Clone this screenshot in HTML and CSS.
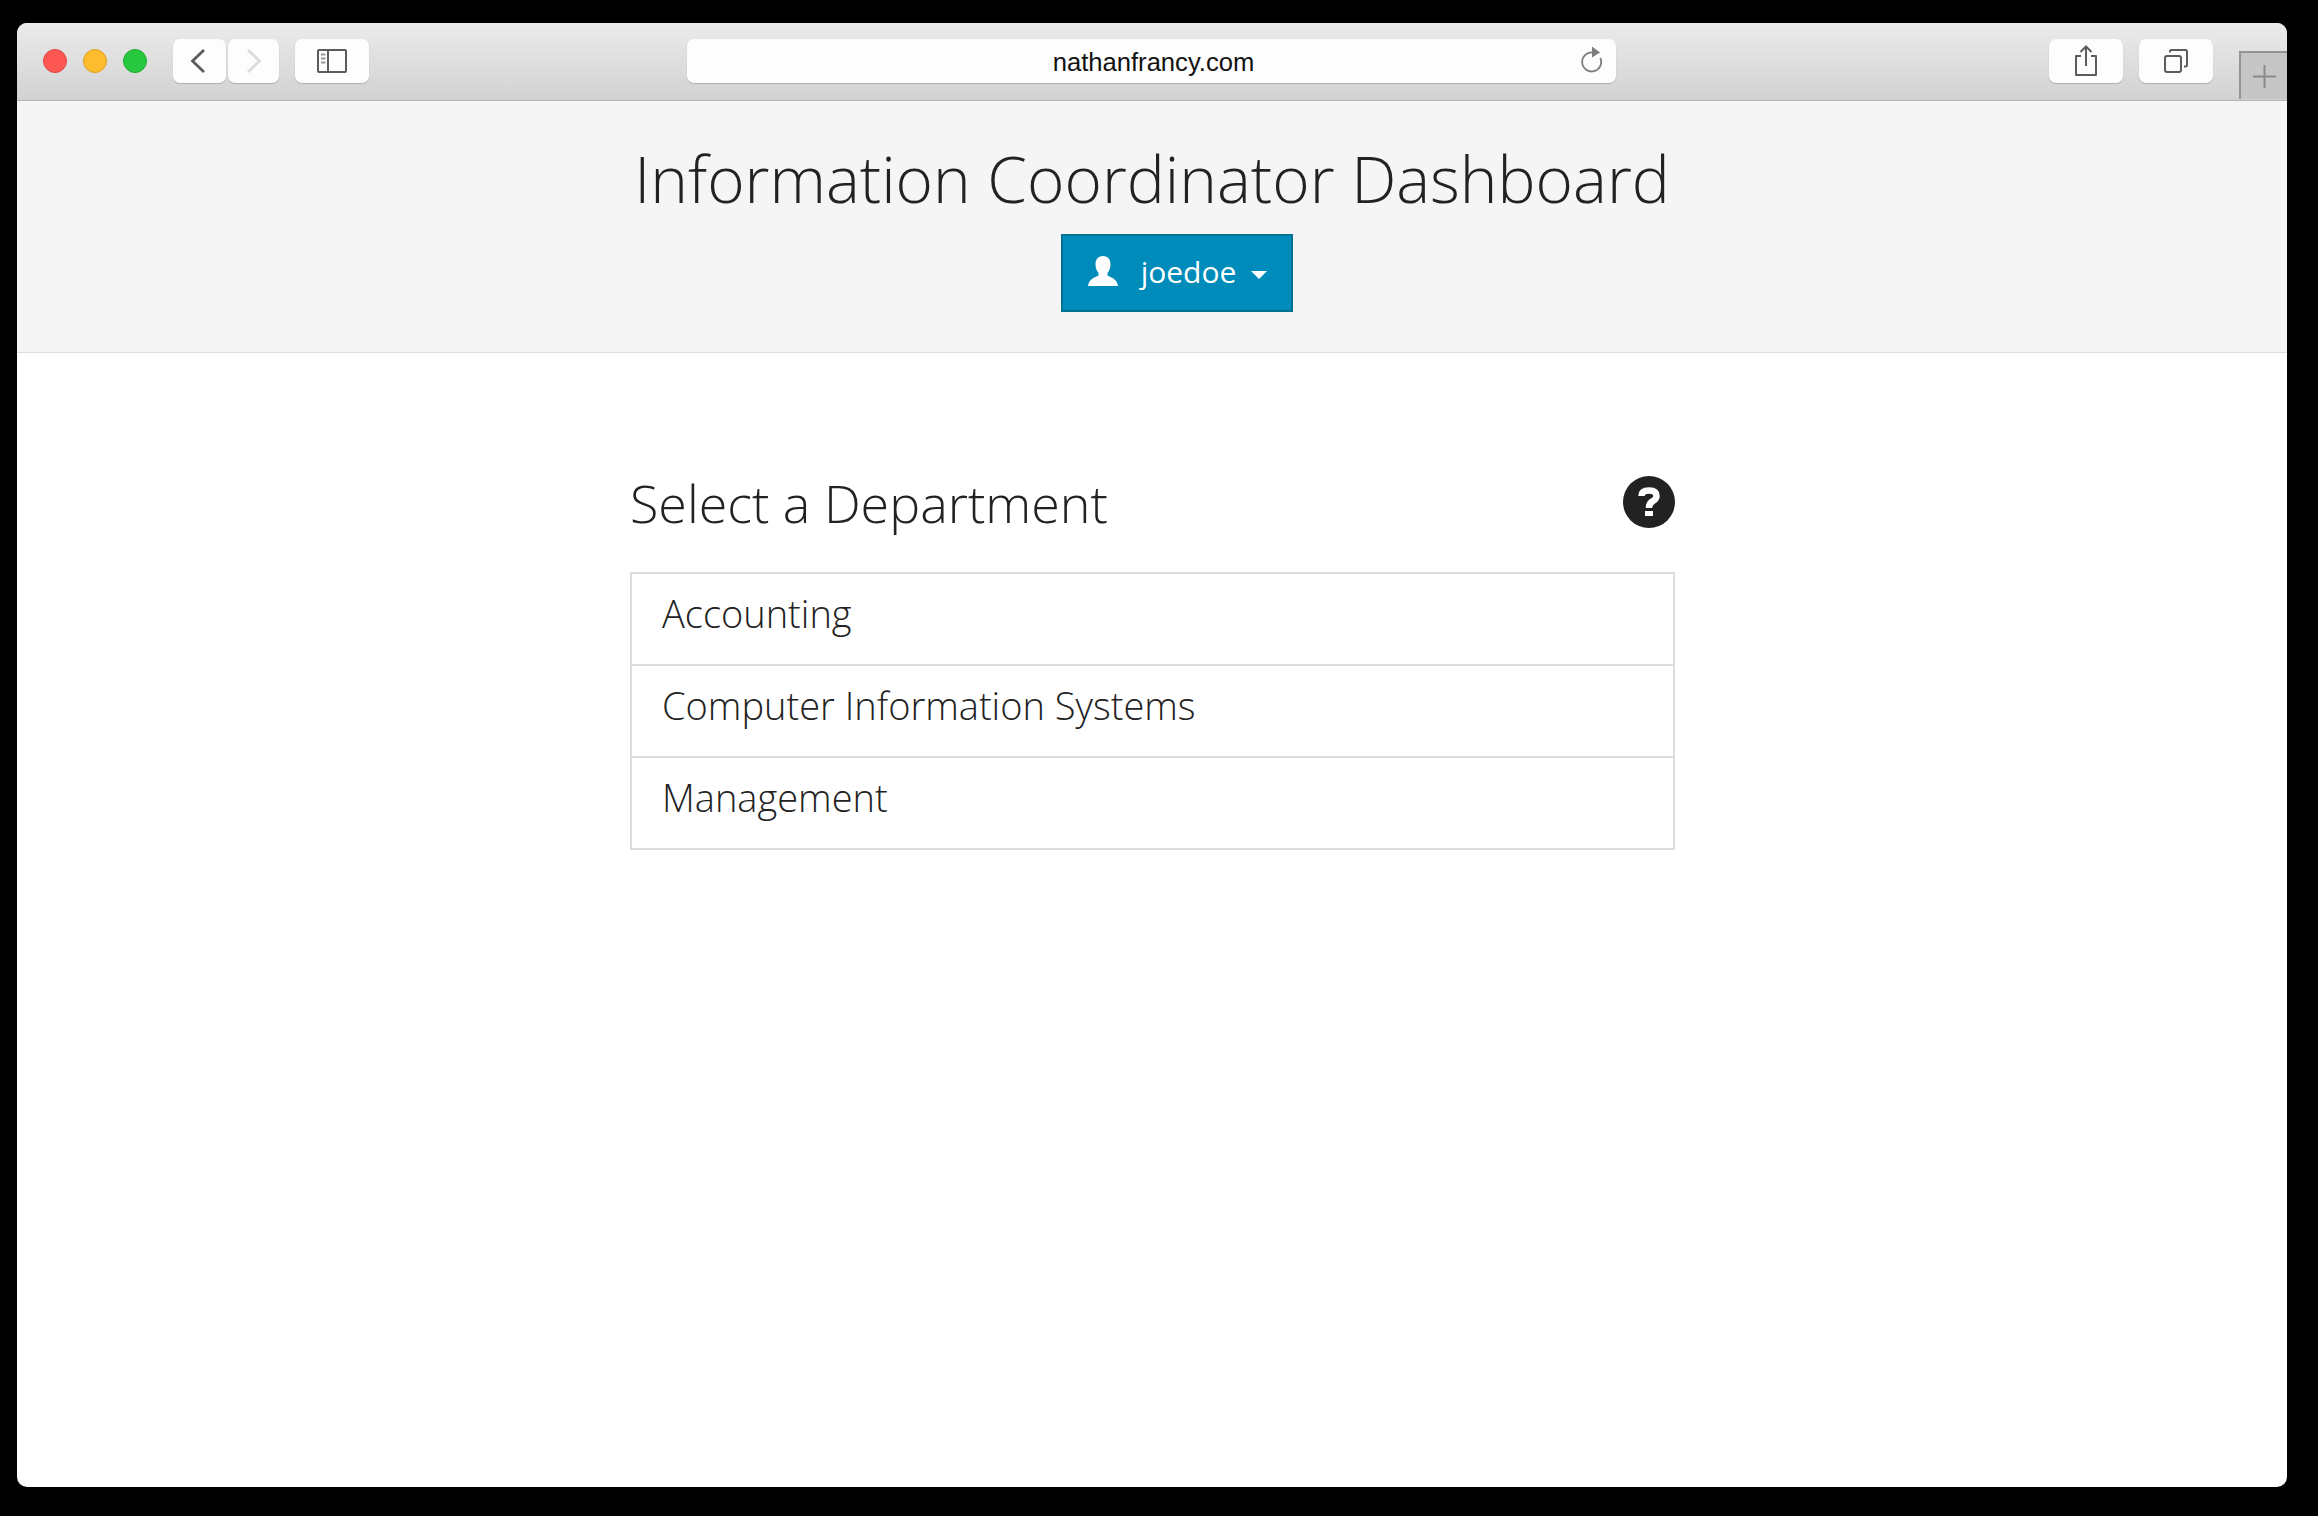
FILE: index.html
```html
<!DOCTYPE html>
<html lang="en">

<head>
    <meta charset="UTF-8">
    <title>Information Coordinator Dashboard</title>
    <link rel="stylesheet" href="styles.css">
</head>

<body>
    <div class="window">
        <!-- browser toolbar -->
        <div class="toolbar">
            <div class="lights">
                <span class="light red"></span>
                <span class="light yellow"></span>
                <span class="light green"></span>
            </div>
            <div class="nav-btns">
                <div class="tool-btn back">
                    <svg width="16" height="26" viewBox="0 0 16 26"><path d="M14 2 L2.5 13 L14 24" fill="none" stroke="#5c5c5c" stroke-width="2.8"/></svg>
                </div>
                <div class="tool-btn forward">
                    <svg width="16" height="26" viewBox="0 0 16 26"><path d="M2 2 L13.5 13 L2 24" fill="none" stroke="#dcdcdc" stroke-width="2.8"/></svg>
                </div>
            </div>
            <div class="tool-btn sidebar-btn">
                <svg width="30" height="24" viewBox="0 0 30 24">
                    <rect x="1" y="1" width="28" height="22" rx="1" fill="none" stroke="#5c5c5c" stroke-width="2"/>
                    <path d="M11 1 V23" stroke="#5c5c5c" stroke-width="2"/>
                    <path d="M4 5.5 H8.5 M4 9.5 H8.5 M4 13.5 H8.5" stroke="#9a9a9a" stroke-width="2"/>
                </svg>
            </div>
            <div class="url-bar">
                <span class="url-text">nathanfrancy.com</span>
                <svg class="reload" width="24" height="28" viewBox="0 0 24 28">
                    <path d="M13.5 6.5 A9.5 9.5 0 1 0 21.3 12" fill="none" stroke="#7c7c7c" stroke-width="1.8"/>
                    <path d="M13 0.5 L21 6.5 L13 11.5 Z" fill="#7c7c7c"/>
                </svg>
            </div>
            <div class="tool-btn share-btn">
                <svg width="24" height="32" viewBox="0 0 24 32">
                    <path d="M7 11 H2 V30 H22 V11 H17" fill="none" stroke="#5c5c5c" stroke-width="2" stroke-linejoin="round"/>
                    <path d="M12 21 V2 M6.5 7 L12 1.5 L17.5 7" fill="none" stroke="#5c5c5c" stroke-width="2"/>
                </svg>
            </div>
            <div class="tool-btn tabs-btn">
                <svg width="24" height="24" viewBox="0 0 24 24">
                    <rect x="1" y="7" width="16" height="16" rx="2" fill="none" stroke="#5c5c5c" stroke-width="2"/>
                    <path d="M6 3.5 V2.5 Q6 1 7.5 1 H21.5 Q23 1 23 2.5 V16 Q23 17.5 21.5 17.5 H20" fill="none" stroke="#5c5c5c" stroke-width="2"/>
                </svg>
            </div>
            <div class="new-tab">
                <svg width="23" height="23" viewBox="0 0 23 23"><path d="M11.5 0 V23 M0 11.5 H23" stroke="#8a8a8a" stroke-width="2"/></svg>
            </div>
        </div>

        <!-- page -->
        <header class="page-header">
            <h1 class="page-title">Information Coordinator Dashboard</h1>
            <button class="user-btn">
                <svg class="user-icon" width="32" height="32" viewBox="0 0 32 32">
                    <path d="M16 1 C21 1 23.5 4.5 23.5 9.5 C23.5 13.5 22 16 20.5 18 L20.5 20.5 C24 22.5 30 23.5 31 31 L1 31 C2 23.5 8 22.5 11.5 20.5 L11.5 18 C10 16 8.5 13.5 8.5 9.5 C8.5 4.5 11 1 16 1 Z" fill="#fff"/>
                </svg>
                <span class="user-name">joedoe</span>
                <span class="caret"></span>
            </button>
        </header>

        <main class="content">
            <div class="section-head">
                <h2 class="section-title">Select a Department</h2>
                <svg class="help-icon" width="52" height="52" viewBox="0 0 52 52">
                    <circle cx="26" cy="26" r="26" fill="#222"/>
                    <path d="M18.5 20 Q18.5 14.5 26 14.5 Q33.5 14.5 33.5 20 Q33.5 23 30 25 Q26 27 26 32" fill="none" stroke="#fff" stroke-width="6.5"/>
                    <rect x="22" y="35" width="8" height="5" fill="#fff"/>
                </svg>
            </div>
            <ul class="dept-list">
                <li class="dept-item">Accounting</li>
                <li class="dept-item">Computer Information Systems</li>
                <li class="dept-item">Management</li>
            </ul>
        </main>
    </div>
</body>

</html>
```

FILE: styles.css
```css
html, body {
    margin: 0;
    height: 100%;
}

body {
    background: #000;
    padding: 23px 31px 29px 17px;
    box-sizing: border-box;
    font-family: "Open Sans", sans-serif;
    color: #222;
}

.window {
    height: 100%;
    background: #fff;
    border-radius: 10px;
    overflow: hidden;
    display: flex;
    flex-direction: column;
}

/* browser toolbar */
.toolbar {
    height: 78px;
    flex-shrink: 0;
    box-sizing: border-box;
    padding: 16px 0 0 26px;
    display: flex;
    align-items: flex-start;
    background: linear-gradient(#ebebeb, #d2d2d2);
    border-bottom: 1px solid #b4b4b4;
}

.lights {
    display: flex;
    gap: 16px;
    margin: 10px 0 0 0;
}
.light {
    width: 24px;
    height: 24px;
    box-sizing: border-box;
    border-radius: 50%;
    border: 1px solid;
}
.red { background: #fc5753; border-color: #df4744; }
.yellow { background: #fdbc2e; border-color: #dfa123; }
.green { background: #27c83f; border-color: #1eab2d; }

.tool-btn {
    height: 44px;
    background: #fdfdfd;
    border-radius: 7px;
    box-shadow: 0 1px 1px #b0b0b0;
    display: flex;
    align-items: center;
    justify-content: center;
    flex-shrink: 0;
}

.nav-btns {
    display: flex;
    gap: 2px;
    margin-left: 26px;
}
.back { width: 53px; }
.back svg { margin-right: 3px; }
.forward { width: 51px; }

.sidebar-btn {
    width: 74px;
    margin-left: 16px;
}

.url-bar {
    width: 929px;
    height: 44px;
    margin-left: 318px;
    flex-shrink: 0;
    background: #fdfdfd;
    border-radius: 7px;
    box-shadow: 0 1px 1px #b0b0b0;
    display: flex;
    align-items: center;
    justify-content: center;
    position: relative;
}
.url-text {
    font-family: "Liberation Sans", sans-serif;
    font-size: 25.6px;
    color: #111;
    margin: 3px 0 0 4px;
}
.reload {
    position: absolute;
    right: 13px;
    top: 7px;
}

.share-btn {
    width: 74px;
    margin-left: 433px;
}
.tabs-btn {
    width: 74px;
    margin-left: 16px;
}

.new-tab {
    width: 48px;
    height: 48px;
    box-sizing: border-box;
    margin: 12px 0 0 26px;
    border: 2px solid #949494;
    border-right: 0;
    border-bottom: 0;
    background: #c6c6c6;
    display: flex;
    align-items: center;
    justify-content: center;
    flex-shrink: 0;
}

/* page header */
.page-header {
    height: 252px;
    flex-shrink: 0;
    box-sizing: border-box;
    background: #f5f5f5;
    border-bottom: 1px solid #ddd;
    display: flex;
    flex-direction: column;
    align-items: center;
    padding-top: 38px;
}

.page-title {
    margin: 0;
    font-size: 63.9px;
    line-height: 80px;
    font-weight: 300;
    color: #222;
}

.user-btn {
    width: 232px;
    height: 78px;
    margin-top: 15px;
    margin-left: 50px;
    box-sizing: border-box;
    background: #008cba;
    border: 2px solid #007095;
    color: #fff;
    font-family: "Open Sans", sans-serif;
    display: flex;
    align-items: center;
    justify-content: center;
    padding: 0;
}
.user-icon {
    margin-right: 22px;
    margin-top: -4px;
}
.user-name {
    font-size: 30px;
    font-weight: 400;
    margin-top: -3px;
}
.caret {
    width: 0;
    height: 0;
    margin-left: 15px;
    margin-top: 3px;
    border-left: 8px solid transparent;
    border-right: 8px solid transparent;
    border-top: 8px solid #fff;
}

/* department list */
.content {
    width: 1045px;
    align-self: center;
    margin-left: 1px;
    padding-top: 115px;
}

.section-head {
    display: flex;
    justify-content: space-between;
    align-items: flex-start;
    height: 104px;
}

.section-title {
    margin: 0;
    font-size: 52px;
    line-height: 70px;
    font-weight: 300;
    color: #222;
}

.help-icon {
    margin-top: 8px;
}

.dept-list {
    list-style: none;
    margin: 0;
    padding: 0;
    border: 2px solid #ddd;
    border-bottom: 0;
}

.dept-item {
    height: 92px;
    box-sizing: border-box;
    padding-left: 30px;
    border-bottom: 2px solid #ddd;
    font-size: 38px;
    font-weight: 300;
    line-height: 79px;
    color: #222;
}
```
